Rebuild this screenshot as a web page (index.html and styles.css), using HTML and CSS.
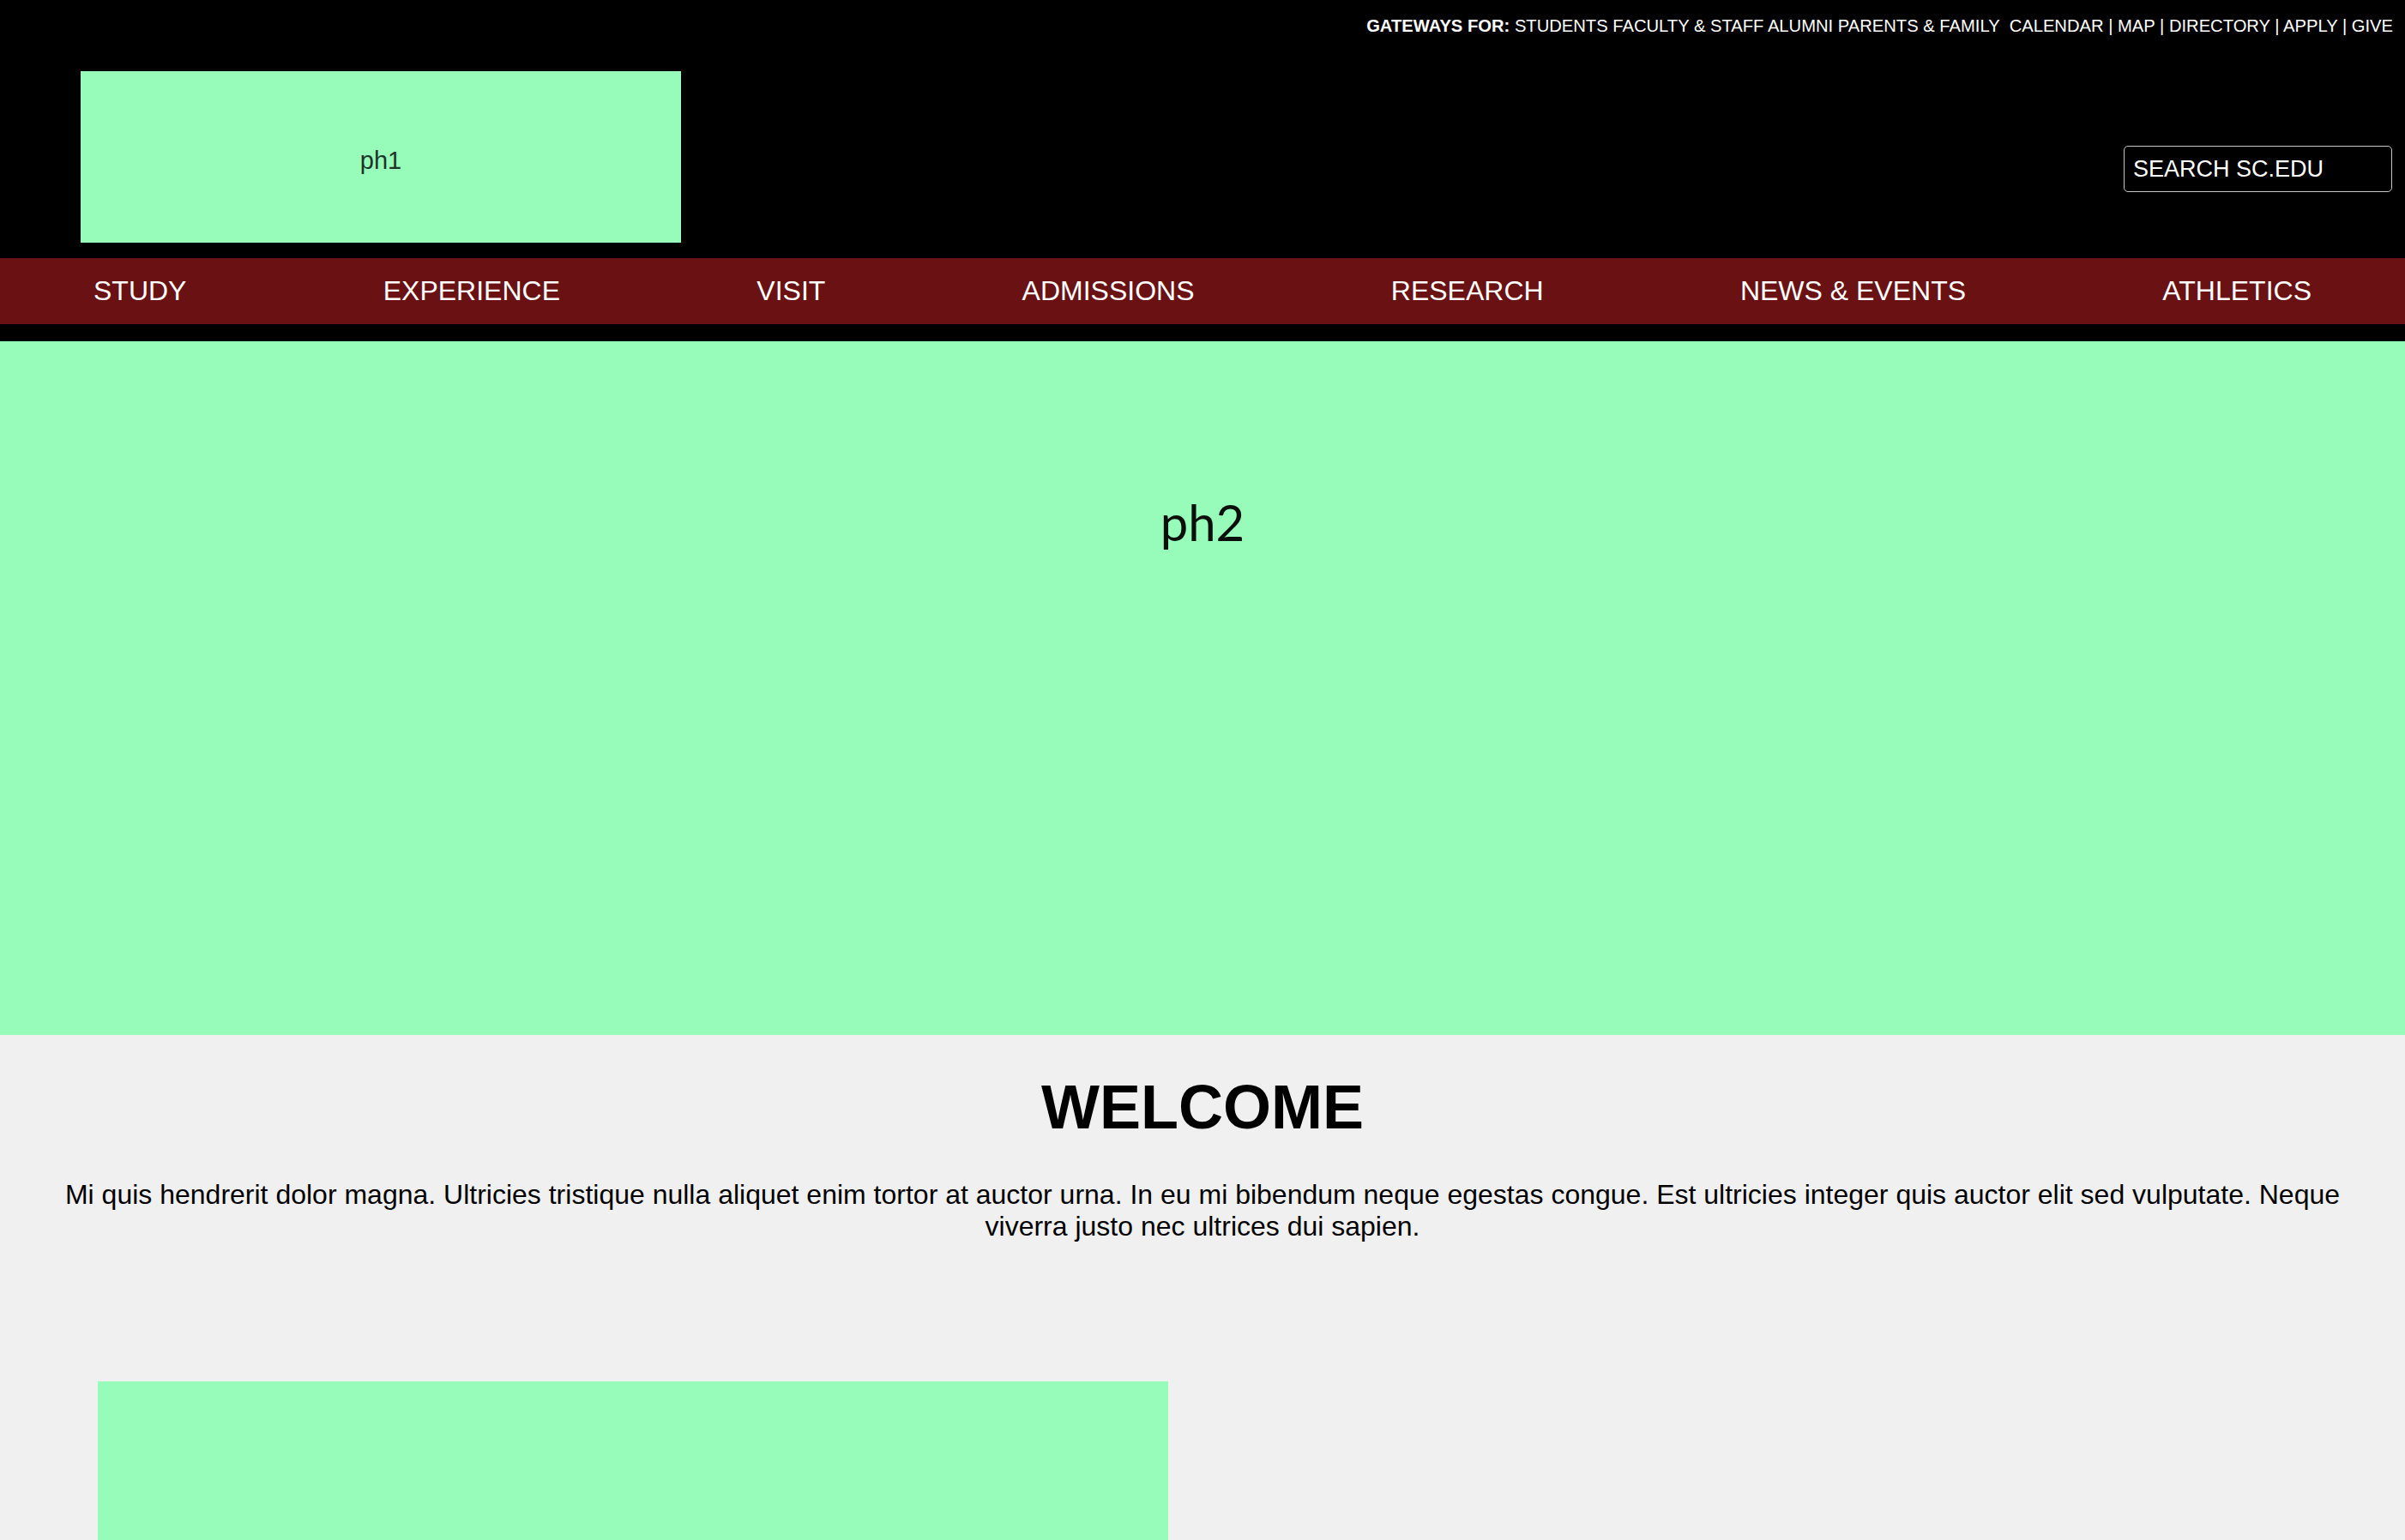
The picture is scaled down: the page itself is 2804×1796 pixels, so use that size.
FILE: index.html
```html
<!DOCTYPE html>
<html lang="en">
<head>
<meta charset="utf-8">
<title>University of South Carolina</title>
<link rel="stylesheet" href="styles.css">
</head>
<body>
<header class="site-header">
  <div class="utility">
    <span class="gateways"><strong>GATEWAYS FOR:</strong> <a href="#">STUDENTS</a> <a href="#">FACULTY &amp; STAFF</a> <a href="#">ALUMNI</a> <a href="#">PARENTS &amp; FAMILY</a></span>
    <span class="quick"><a href="#">CALENDAR</a> | <a href="#">MAP</a> | <a href="#">DIRECTORY</a> | <a href="#">APPLY</a> | <a href="#">GIVE</a></span>
  </div>
  <div class="brand-row">
    <div class="logo"><span>ph1</span></div>
    <div class="search" role="search"><span>SEARCH SC.EDU</span></div>
  </div>
  <nav class="main-nav">
    <a href="#">STUDY</a>
    <a href="#">EXPERIENCE</a>
    <a href="#">VISIT</a>
    <a href="#">ADMISSIONS</a>
    <a href="#">RESEARCH</a>
    <a href="#">NEWS &amp; EVENTS</a>
    <a href="#">ATHLETICS</a>
  </nav>
</header>
<main>
  <section class="hero"><span>ph2</span></section>
  <section class="welcome">
    <h1>WELCOME</h1>
    <p>Mi quis hendrerit dolor magna. Ultricies tristique nulla aliquet enim tortor at auctor urna. In eu mi bibendum neque egestas congue. Est ultricies integer quis auctor elit sed vulputate. Neque viverra justo nec ultrices dui sapien.</p>
  </section>
  <section class="features">
    <div class="feature"></div>
  </section>
</main>
</body>
</html>
```
FILE: styles.css
```css
* { box-sizing: border-box; }
html, body {
  margin: 0;
  padding: 0;
  background: #f0f0f0;
  font-family: "Liberation Sans", Arial, sans-serif;
  color: #000;
}
a { color: inherit; text-decoration: none; }

.site-header {
  background: #000;
  color: #fff;
  padding-bottom: 20px;
}

.utility {
  display: flex;
  justify-content: flex-end;
  padding: 19px 14px 0 0;
  font-size: 20.2px;
  line-height: 23px;
  white-space: nowrap;
}
.utility .quick { margin-left: 11px; }

.brand-row {
  display: flex;
  justify-content: space-between;
  align-items: flex-start;
  margin-top: 41px;
  padding: 0 15px 18px 94px;
}
.logo {
  width: 700px;
  height: 200px;
  background: #97fbba;
  display: flex;
  align-items: center;
  justify-content: center;
}
.logo span {
  font-size: 29px;
  color: #1f3328;
  margin-top: 9px;
}
.search {
  margin-top: 87px;
  width: 313px;
  height: 54px;
  border: 1px solid #c8c8c8;
  border-radius: 5px;
  padding-left: 10px;
  display: flex;
  align-items: center;
  font-size: 27px;
  color: #fff;
}

.main-nav {
  height: 77px;
  background: #691113;
  display: flex;
  justify-content: space-between;
  align-items: center;
  padding: 0 109px;
  font-size: 32px;
}

.hero {
  height: 809px;
  background: #97fbba;
  display: flex;
  justify-content: center;
  align-items: flex-start;
  padding-top: 176px;
}
.hero span {
  font-family: Lato, "Open Sans", sans-serif;
  font-size: 58px;
  color: #0a0f0c;
}

.welcome {
  text-align: center;
  padding: 0 40px;
}
.welcome h1 {
  margin: 43px 0 42px;
  font-size: 72px;
  font-weight: bold;
  line-height: 83px;
}
.welcome p {
  margin: 0;
  font-size: 32px;
  line-height: 37px;
}

.features {
  display: grid;
  grid-template-columns: 1248px 1fr;
  padding: 162px 114px 0;
}
.feature {
  height: 620px;
  background: #97fbba;
}
```
